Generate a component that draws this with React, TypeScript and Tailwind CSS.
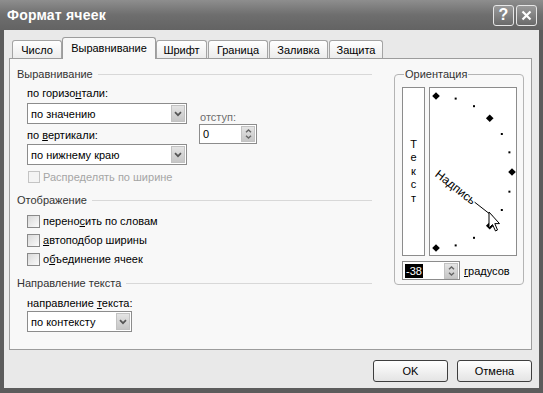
import React from "react";

function DropBtn() {
  return (
    <div className="w-[14px] h-[17px] mr-[1px] bg-linear-to-b from-[#e4e4e4] to-[#c6c6c6] border border-[#c2c2c2] flex items-center justify-center">
      <svg width="8" height="6" viewBox="0 0 8 6">
        <path d="M1 1.2 L4 4.2 L7 1.2" stroke="#555" strokeWidth="1.7" fill="none" />
      </svg>
    </div>
  );
}

function SpinBtn() {
  return (
    <div className="w-[14px] h-[16px] mr-[1px] bg-linear-to-b from-[#e4e4e4] to-[#c6c6c6] border border-[#c2c2c2] flex flex-col items-center justify-center gap-[2px]">
      <svg width="7" height="4" viewBox="0 0 7 4">
        <path d="M1 3.3 L3.5 1 L6 3.3" stroke="#666" strokeWidth="1.4" fill="none" />
      </svg>
      <svg width="7" height="4" viewBox="0 0 7 4">
        <path d="M1 0.7 L3.5 3 L6 0.7" stroke="#666" strokeWidth="1.4" fill="none" />
      </svg>
    </div>
  );
}

function Select({ text, className }: { text: string; className: string }) {
  return (
    <div className={"h-[21px] border border-[#8c8c8c] bg-white flex items-center justify-between " + className}>
      <span className="pl-[3px]">{text}</span>
      <DropBtn />
    </div>
  );
}

function GroupHeader({ title }: { title: string }) {
  return (
    <div className="flex items-center h-[14px]">
      <span className="text-[#333]">{title}</span>
      <div className="flex-1 h-px bg-[#d8d8d8] ml-[5px]" />
    </div>
  );
}

function Check({ children, disabled, className }: { children: React.ReactNode; disabled?: boolean; className: string }) {
  return (
    <div className={"flex items-center h-[14px] ml-[10px] " + className}>
      <div
        className={
          disabled
            ? "w-[12px] h-[12px] ml-[1px] border border-[#c4c4c4] bg-[#f4f4f4]"
            : "w-[13px] h-[13px] border border-[#8a8a8a] bg-linear-to-br from-[#d9d9d9] to-[#fbfbfb]"
        }
      />
      <span className={disabled ? "ml-[3px] text-[#a5a5a5]" : "ml-[3px]"}>{children}</span>
    </div>
  );
}

function Dial() {
  const cx = 6;
  const cy = 84;
  const r = 76;
  const marks = [];
  for (let i = 0; i <= 12; i++) {
    const deg = 90 - i * 15;
    const a = (deg * Math.PI) / 180;
    const x = cx + r * Math.cos(a);
    const y = cy - r * Math.sin(a);
    if (deg % 45 === 0) {
      marks.push(
        <polygon
          key={i}
          points={`${x},${y - 3.8} ${x + 3.8},${y} ${x},${y + 3.8} ${x - 3.8},${y}`}
          fill="#000"
        />
      );
    } else {
      marks.push(<rect key={i} x={x - 1} y={y - 1} width="2" height="2" fill="#000" />);
    }
  }
  const c = Math.cos((38 * Math.PI) / 180);
  const s = Math.sin((38 * Math.PI) / 180);
  return (
    <div className="w-[88px] h-[169px] border border-[#8c8c8c] bg-white">
      <svg width="86" height="167" viewBox="0 0 86 167">
        {marks}
        <text
          x={cx + 1}
          y={cy + 4}
          transform={`rotate(38 ${cx} ${cy})`}
          fontSize="12"
          fontFamily="Liberation Sans, Arial, sans-serif"
          fill="#000"
        >
          Надпись
        </text>
        <line x1={cx + 49 * c} y1={cy + 49 * s} x2={cx + 72 * c} y2={cy + 72 * s} stroke="#000" strokeWidth="1" />
        <path
          d="M59 124 L59 140 L62.5 136.5 L65.5 143 L67.5 142 L64.8 135.6 L69.5 135.6 Z"
          fill="#fff"
          stroke="#000"
          strokeWidth="1"
          strokeLinejoin="round"
        />
      </svg>
    </div>
  );
}

const tabs: { label: string; cls: string; active?: boolean }[] = [
  { label: "Число", cls: "w-[50px]" },
  { label: "Выравнивание", cls: "w-[94px]", active: true },
  { label: "Шрифт", cls: "w-[51px] mr-[1px]" },
  { label: "Граница", cls: "w-[60px] mr-[1px]" },
  { label: "Заливка", cls: "w-[59px] mr-[1px]" },
  { label: "Защита", cls: "w-[54px]" },
];

export default function App() {
  return (
    <div className="w-[543px] h-[393px] overflow-hidden bg-[#5c5c5c] flex flex-col font-['Liberation_Sans',Arial,sans-serif] text-[11px] leading-[14px] text-black">
      {/* Title bar */}
      <div className="h-[30px] shrink-0 flex items-center justify-between pl-[7px] pr-[6px] bg-linear-to-b from-[#8e8e8e] via-[#6e6e6e] to-[#636363]">
        <span className="text-white font-bold text-[14px] leading-[16px] tracking-[0.2px]">Формат ячеек</span>
        <div className="flex gap-[2px]">
          <div className="w-[21px] h-[21px] rounded-[3px] border border-[#e6e6e6] bg-linear-to-b from-[#9a9a9a] to-[#6a6a6a] flex items-center justify-center text-white font-bold text-[16px] leading-[16px]">
            ?
          </div>
          <div className="w-[21px] h-[21px] rounded-[3px] border border-[#e6e6e6] bg-linear-to-b from-[#9a9a9a] to-[#6a6a6a] flex items-center justify-center">
            <svg width="11" height="11" viewBox="0 0 11 11">
              <path d="M1.5 1.5 L9.5 9.5 M9.5 1.5 L1.5 9.5" stroke="#fff" strokeWidth="2.2" />
            </svg>
          </div>
        </div>
      </div>

      {/* Body */}
      <div className="flex-1 mx-[4px] mb-[5px] bg-[#e9e9e9] flex flex-col">
        {/* Tabs */}
        <div className="flex items-end h-[22px] mt-[7px] pl-[8px]">
          {tabs.map((t) =>
            t.active ? (
              <div
                key={t.label}
                className={"relative z-10 h-[22px] rounded-t-[3px] border border-b-0 border-[#9c9c9c] bg-[#f8f8f8] flex items-center justify-center pb-[1px] " + t.cls}
              >
                {t.label}
              </div>
            ) : (
              <div
                key={t.label}
                className={"h-[19px] rounded-t-[3px] border border-b-0 border-[#a4a4a4] bg-linear-to-b from-white to-[#ebebeb] flex items-center justify-center " + t.cls}
              >
                {t.label}
              </div>
            )
          )}
        </div>

        {/* Panel */}
        <div className="-mt-px ml-[5px] mr-[7px] h-[292px] border border-[#9c9c9c] bg-[#f8f8f8] flex pt-[8px] pl-[7px]">
          {/* Left column */}
          <div className="w-[355px] flex flex-col">
            <GroupHeader title="Выравнивание" />
            <div className="flex mt-[5px]">
              <div className="ml-[10px] w-[160px] flex flex-col">
                <div className="h-[14px]">
                  по горизо<u>н</u>тали:
                </div>
                <Select text="по значению" className="mt-[3px] w-[160px]" />
                <div className="h-[14px] mt-[4px]">
                  по <u>в</u>ертикали:
                </div>
                <Select text="по нижнему краю" className="mt-[2px] w-[160px]" />
              </div>
              <div className="ml-[12px] flex flex-col">
                <div className="h-[14px] mt-[24px] pl-[1px] text-[#6e6e6e]">отступ:</div>
                <div className="w-[58px] h-[20px] border border-[#8c8c8c] bg-white flex items-center justify-between">
                  <span className="pl-[3px]">0</span>
                  <SpinBtn />
                </div>
              </div>
            </div>
            <Check disabled className="mt-[5px]">
              Распределять по ширине
            </Check>

            <div className="mt-[9px]">
              <GroupHeader title="Отображение" />
            </div>
            <Check className="mt-[7px]">
              перено<u>с</u>ить по словам
            </Check>
            <Check className="mt-[5px]">
              <u>а</u>втоподбор ширины
            </Check>
            <Check className="mt-[5px]">
              о<u>б</u>ъединение ячеек
            </Check>

            <div className="mt-[10px]">
              <GroupHeader title="Направление текста" />
            </div>
            <div className="h-[14px] mt-[6px] ml-[10px]">
              направление <u>т</u>екста:
            </div>
            <Select text="по контексту" className="mt-[1px] ml-[10px] w-[105px]" />
          </div>

          {/* Orientation */}
          <fieldset className="ml-[22px] w-[130px] h-[218px] border border-[#b4b4b4] rounded-[4px] pl-[7px] pr-[6px] pt-[6px]">
            <legend className="ml-[2px] px-[1px] h-[14px] text-[#333]">Ориентация</legend>
            <div className="flex gap-[4px]">
              <div className="w-[23px] h-[169px] border border-[#8c8c8c] bg-white flex flex-col items-center justify-center leading-[13.5px] text-[11px]">
                {"Текст".split("").map((ch, i) => (
                  <span key={i}>{ch}</span>
                ))}
              </div>
              <Dial />
            </div>
            <div className="flex items-center mt-[5px]">
              <div className="w-[58px] h-[19px] border border-[#8c8c8c] bg-white flex items-center justify-between">
                <span className="ml-[2px] bg-black text-white leading-[14px] px-[1px]">-38</span>
                <SpinBtn />
              </div>
              <span className="ml-[4px]">
                <u>г</u>радусов
              </span>
            </div>
          </fieldset>
        </div>

        {/* Buttons */}
        <div className="flex justify-end gap-[9px] mt-[10px] mr-[7px]">
          <div className="w-[75px] h-[22px] rounded-[3px] border border-[#3e3e3e] bg-linear-to-b from-white to-[#e4e4e4] flex items-center justify-center">
            OK
          </div>
          <div className="w-[75px] h-[22px] rounded-[3px] border border-[#3e3e3e] bg-linear-to-b from-white to-[#e4e4e4] flex items-center justify-center">
            Отмена
          </div>
        </div>
      </div>
    </div>
  );
}
